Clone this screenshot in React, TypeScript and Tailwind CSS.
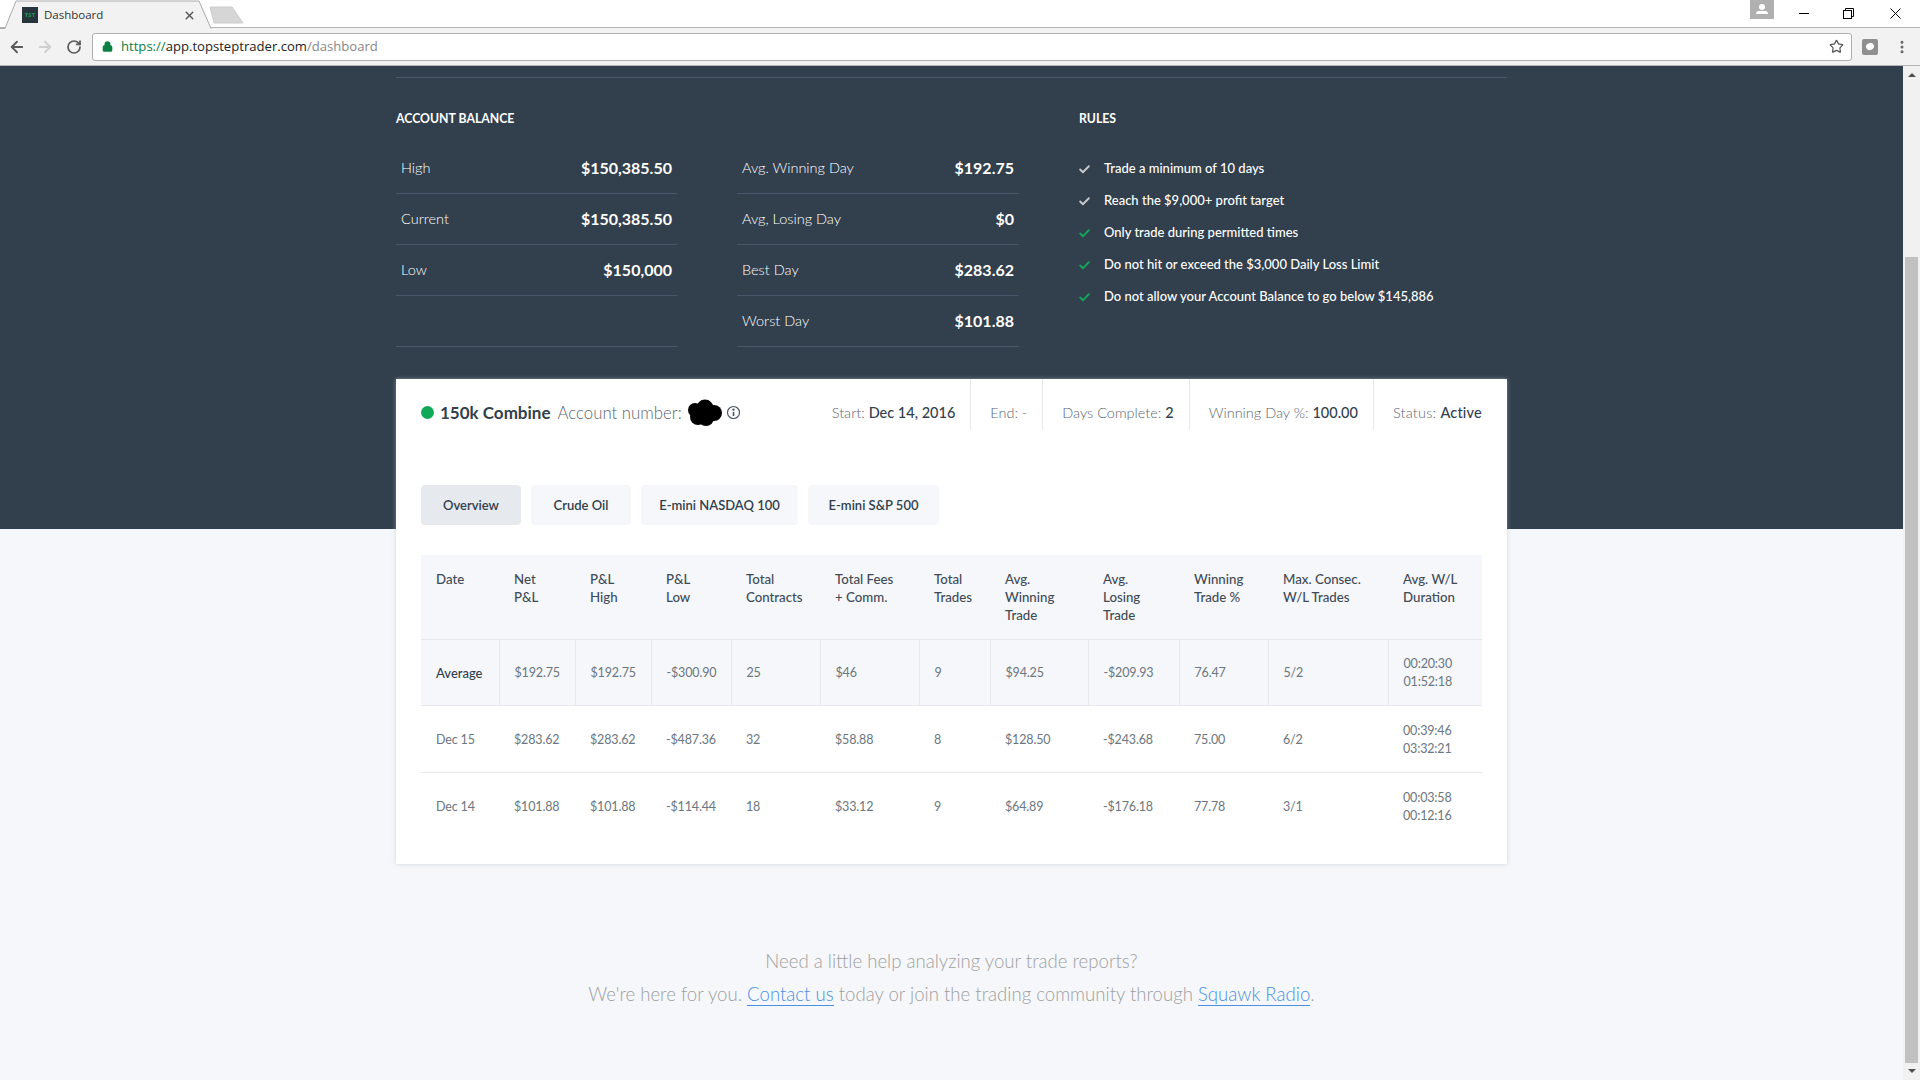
import { ArrowLeft, ArrowRight, Check, EllipsisVertical, Lock, RotateCw, Star, X } from "lucide-react";

const leftRows = [
  { label: "High", value: "$150,385.50" },
  { label: "Current", value: "$150,385.50" },
  { label: "Low", value: "$150,000" },
];

const middleRows = [
  { label: "Avg. Winning Day", value: "$192.75" },
  { label: "Avg, Losing Day", value: "$0" },
  { label: "Best Day", value: "$283.62" },
  { label: "Worst Day", value: "$101.88" },
];

const rules = [
  { text: "Trade a minimum of 10 days", ok: false },
  { text: "Reach the $9,000+ profit target", ok: false },
  { text: "Only trade during permitted times", ok: true },
  { text: "Do not hit or exceed the $3,000 Daily Loss Limit", ok: true },
  { text: "Do not allow your Account Balance to go below $145,886", ok: true },
];

const stats = [
  { label: "End:", value: "-", plain: true },
  { label: "Days Complete:", value: "2" },
  { label: "Winning Day %:", value: "100.00" },
  { label: "Status:", value: "Active" },
];

const tabs = [
  { name: "Overview", w: "w-[100px]" },
  { name: "Crude Oil", w: "w-[100px]" },
  { name: "E-mini NASDAQ 100", w: "w-[157px]" },
  { name: "E-mini S&P 500", w: "w-[131px]" },
];

const columns = [
  { w: "w-[78px]", head: ["Date"] },
  { w: "w-[76px]", head: ["Net", "P&L"] },
  { w: "w-[76px]", head: ["P&L", "High"] },
  { w: "w-[80px]", head: ["P&L", "Low"] },
  { w: "w-[89px]", head: ["Total", "Contracts"] },
  { w: "w-[99px]", head: ["Total Fees", "+ Comm."] },
  { w: "w-[71px]", head: ["Total", "Trades"] },
  { w: "w-[98px]", head: ["Avg.", "Winning", "Trade"] },
  { w: "w-[91px]", head: ["Avg.", "Losing", "Trade"] },
  { w: "w-[89px]", head: ["Winning", "Trade %"] },
  { w: "w-[120px]", head: ["Max. Consec.", "W/L Trades"] },
  { w: "w-[94px]", head: ["Avg. W/L", "Duration"] },
];

const reportRows = [
  ["Average", "$192.75", "$192.75", "-$300.90", "25", "$46", "9", "$94.25", "-$209.93", "76.47", "5/2", "00:20:30|01:52:18"],
  ["Dec 15", "$283.62", "$283.62", "-$487.36", "32", "$58.88", "8", "$128.50", "-$243.68", "75.00", "6/2", "00:39:46|03:32:21"],
  ["Dec 14", "$101.88", "$101.88", "-$114.44", "18", "$33.12", "9", "$64.89", "-$176.18", "77.78", "3/1", "00:03:58|00:12:16"],
];

const BrowserChrome = () => {
  return (
    <div className="w-full shrink-0 font-['Open_Sans',sans-serif]">
      <div className="relative h-[28px] bg-white border-b border-[#b4b4b4]">
        <svg className="absolute left-0 top-0" width="250" height="29" viewBox="0 0 250 29">
          <path d="M0 28.5 H5 L16 1 H199 L211 28.5" fill="#f2f2f2" stroke="#aaaaaa" />
          <path d="M6 28.5 H210" stroke="#f2f2f2" strokeWidth="1.5" />
          <path d="M210 7 H232 L243 23 H214 Z" fill="#d6d6d6" stroke="#cccccc" strokeLinejoin="round" />
        </svg>
        <div className="absolute left-[22px] top-[7px] w-4 h-4 bg-[#27343c] flex items-center justify-center">
          <span className="text-[6px] font-bold leading-none text-[#1f9d55]">TST</span>
        </div>
        <span className="absolute left-[44px] top-[6px] text-[11.5px] leading-[18px] text-[#333333]">Dashboard</span>
        <X size={13} strokeWidth={2.5} className="absolute left-[183px] top-[9px] text-[#555555]" />
        <div className="absolute left-[1750px] top-0 w-6 h-[19px] bg-[#b0b0b0] flex flex-col items-center pt-[4px]">
          <div className="w-[6px] h-[6px] rounded-full bg-white" />
          <div className="w-[12px] h-[3px] mt-[1px] rounded-t-sm bg-white" />
        </div>
        <div className="absolute left-[1799px] top-[13px] w-[10px] h-px bg-black" />
        <svg className="absolute left-[1843px] top-[8px]" width="11" height="11" viewBox="0 0 11 11" fill="none" stroke="#000000">
          <path d="M2.5 2.5 V0.5 H10.5 V8.5 H8.5" />
          <rect x="0.5" y="2.5" width="8" height="8" />
        </svg>
        <svg className="absolute left-[1890px] top-[8px]" width="11" height="11" viewBox="0 0 11 11" fill="none" stroke="#000000">
          <path d="M0.5 0.5 L10.5 10.5 M10.5 0.5 L0.5 10.5" />
        </svg>
      </div>
      <div className="h-[38px] bg-[#f2f2f2] border-b border-[#b4b4b4] flex items-center">
        <ArrowLeft size={18} strokeWidth={2.4} className="ml-[8px] text-[#5a5a5a]" />
        <ArrowRight size={18} strokeWidth={2.4} className="ml-[10px] text-[#cfcfcf]" />
        <RotateCw size={16} strokeWidth={2.6} className="ml-[12px] text-[#5a5a5a]" />
        <div className="ml-[10px] w-[1760px] h-[28px] bg-white border border-[#b0b0b0] rounded-[3px] flex items-center">
          <Lock size={11} strokeWidth={3} className="ml-[9px] text-[#0b8043] fill-[#0b8043]" />
          <span className="ml-[8px] text-[13.1px] leading-none whitespace-nowrap">
            <span className="text-[#0b8043]">https://</span>
            <span className="text-[#222222]">app.topsteptrader.com</span>
            <span className="text-[#888888]">/dashboard</span>
          </span>
          <Star size={15} strokeWidth={2} className="ml-auto mr-[7px] text-[#555555]" />
        </div>
        <div className="ml-[10px] w-4 h-4 rounded-[2px] bg-[#8f8f8f] flex items-center justify-center">
          <div className="w-[8px] h-[7px] rounded-[50%] bg-white -rotate-[30deg]" />
        </div>
        <EllipsisVertical size={16} strokeWidth={2.5} className="ml-[16px] text-[#666666]" />
      </div>
    </div>
  );
};

const BalanceRow = ({ label, value }: { label: string; value: string }) => {
  return (
    <div className="h-[51px] flex items-center justify-between px-[5px] border-b border-[#47586a]">
      <span className="text-[14.5px] font-light text-white">{label}</span>
      <span className="text-[16px] font-bold text-white">{value}</span>
    </div>
  );
};

const AccountSummary = () => {
  return (
    <div className="bg-[#323f4d] h-[463px] shrink-0">
      <div className="w-[1111px] mx-auto pt-[11px]">
        <div className="border-t border-[#47586a] pt-[33px] flex">
          <div className="w-[281px]">
            <h2 className="text-[12.25px] leading-4 font-bold uppercase text-white">Account Balance</h2>
            <div className="mt-[16px]">
              {leftRows.map((r) => (
                <BalanceRow key={r.label} {...r} />
              ))}
              <div className="h-[51px] border-b border-[#47586a]" />
            </div>
          </div>
          <div className="w-[282px] ml-[60px] pt-[32px]">
            {middleRows.map((r) => (
              <BalanceRow key={r.label} {...r} />
            ))}
          </div>
          <div className="ml-[60px]">
            <h2 className="text-[12.25px] leading-4 font-bold uppercase text-white">Rules</h2>
            <ul className="mt-[32px] flex flex-col gap-[12px]">
              {rules.map((r) => (
                <li key={r.text} className="h-5 flex items-center text-[13px] font-medium text-white">
                  <Check
                    size={13}
                    strokeWidth={3.5}
                    className={r.ok ? "-ml-[1px] mr-[13px] text-[#16a35b]" : "-ml-[1px] mr-[13px] text-[#c8c8c8]"}
                  />
                  {r.text}
                </li>
              ))}
            </ul>
          </div>
        </div>
      </div>
    </div>
  );
};

const CardHeader = () => {
  return (
    <div className="flex items-start h-[51px]">
      <div className="flex items-center h-[67px]">
        <div className="w-[13px] h-[13px] rounded-full bg-[#0fa958]" />
        <span className="ml-[6px] text-[17px] font-bold text-[#323f4d]">150k Combine</span>
        <span className="ml-[7px] text-[16.8px] font-light text-[#5b6670]">Account number:</span>
        <svg className="ml-[4px]" width="37" height="28" viewBox="0 0 37 28" fill="#000000">
          <circle cx="9" cy="11" r="7" />
          <circle cx="19" cy="9" r="8.5" />
          <circle cx="28" cy="14" r="8" />
          <circle cx="12" cy="18" r="8" />
          <circle cx="20" cy="19" r="8" />
        </svg>
        <svg className="ml-[3px]" width="15" height="15" viewBox="0 0 15 15" fill="none" stroke="#4a5661" strokeWidth="1.2">
          <circle cx="7.5" cy="7.5" r="6" />
          <path d="M7.5 6.8 V11" strokeWidth="1.6" />
          <circle cx="7.5" cy="4.6" r="0.6" fill="#4a5661" />
        </svg>
      </div>
      <div className="ml-auto flex items-center h-[51px] text-[14.5px]">
        <div className="pr-[15px] pt-[16px] flex items-center h-full">
          <span className="font-light text-[#5b6670]">Start:&nbsp;</span>
          <span className="font-medium text-[#323f4d]">Dec 14, 2016</span>
        </div>
        {stats.map((s, i) => (
          <div
            key={s.label}
            className={
              i === stats.length - 1
                ? "pl-[19px] pt-[16px] tracking-[0.2px] border-l border-[#e6e8eb] flex items-center h-full"
                : "pl-[19px] pr-[15px] pt-[16px] border-l border-[#e6e8eb] flex items-center h-full"
            }
          >
            <span className="font-light text-[#5b6670]">{s.label}&nbsp;</span>
            <span className={s.plain ? "font-light text-[#5b6670]" : "font-medium text-[#323f4d]"}>{s.value}</span>
          </div>
        ))}
      </div>
    </div>
  );
};

const Tabs = () => {
  return (
    <div className="mt-[55px] flex gap-[10px]">
      {tabs.map((t, i) => (
        <button
          key={t.name}
          className={
            i === 0
              ? `${t.w} h-[40px] pt-[1px] rounded-[4px] bg-[#e6e9ed] text-[13px] font-semibold text-[#323f4d]`
              : `${t.w} h-[40px] pt-[1px] rounded-[4px] bg-[#f5f7fa] text-[13px] font-semibold text-[#323f4d]`
          }
        >
          {t.name}
        </button>
      ))}
    </div>
  );
};

const ReportTable = () => {
  return (
    <table className="mt-[30px] w-[1061px] table-fixed border-collapse text-[12.5px] tracking-[-0.15px]">
      <thead>
        <tr className="bg-[#f5f7fa] h-[84px]">
          {columns.map((c, i) => (
            <th
              key={i}
              className={`${c.w} align-top pl-[15px] pt-[15px] text-left text-[13.25px] tracking-normal font-medium leading-[18px] text-[#3f4b57]`}
            >
              {c.head.map((line) => (
                <div key={line}>{line}</div>
              ))}
            </th>
          ))}
        </tr>
      </thead>
      <tbody>
        {reportRows.map((row, r) => (
          <tr
            key={row[0]}
            className={
              r === 0
                ? "h-[66px] bg-[#f5f7fa] border-t border-b border-[#e6e8eb]"
                : r === 1
                  ? "h-[67px] border-b border-[#e6e8eb]"
                  : "h-[67px]"
            }
          >
            {row.map((cell, c) => (
              <td
                key={c}
                className={
                  r === 0
                    ? c === 0
                      ? "pl-[15px] pt-[2px] text-[13px] tracking-normal font-medium leading-[18px] text-[#323f4d]"
                      : "pl-[15px] pt-[2px] leading-[18px] text-[#6b7680] border-l border-[#e6e8eb]"
                    : "pl-[15px] pt-[2px] leading-[18px] text-[#6b7680]"
                }
              >
                {cell.split("|").map((line) => (
                  <div key={line}>{line}</div>
                ))}
              </td>
            ))}
          </tr>
        ))}
      </tbody>
    </table>
  );
};

const Scrollbar = () => {
  return (
    <div className="w-[17px] shrink-0 bg-[#f1f1f1] flex flex-col items-center">
      <div className="mt-[7px] w-0 h-0 border-x-[4px] border-x-transparent border-b-[4px] border-b-[#505050]" />
      <div className="mt-[180px] w-[13px] h-[806px] bg-[#c1c1c1]" />
      <div className="mt-[6px] w-0 h-0 border-x-[4px] border-x-transparent border-t-[4px] border-t-[#505050]" />
    </div>
  );
};

export default function App() {
  return (
    <div className="h-screen w-full overflow-hidden flex flex-col bg-[#f5f7fa] font-['Lato',sans-serif]">
      <BrowserChrome />
      <div className="flex flex-1 min-h-0">
        <main className="flex-1 min-w-0">
          <AccountSummary />
          <div className="relative w-[1111px] h-[485px] -mt-[150px] mx-auto px-[25px] bg-white shadow-[0_0_4px_rgba(180,190,200,0.6)]">
            <CardHeader />
            <Tabs />
            <ReportTable />
          </div>
          <div className="mt-[81px] text-center text-[18.6px] font-light leading-[33px] text-[#a0a0a0]">
            <p>Need a little help analyzing your trade reports?</p>
            <p>
              We're here for you.{" "}
              <a className="text-[#4a90e2] border-b border-[#4a90e2]">Contact us</a> today or join the trading community
              through <a className="text-[#4a90e2] border-b border-[#4a90e2]">Squawk Radio</a>.
            </p>
          </div>
        </main>
        <Scrollbar />
      </div>
    </div>
  );
}
